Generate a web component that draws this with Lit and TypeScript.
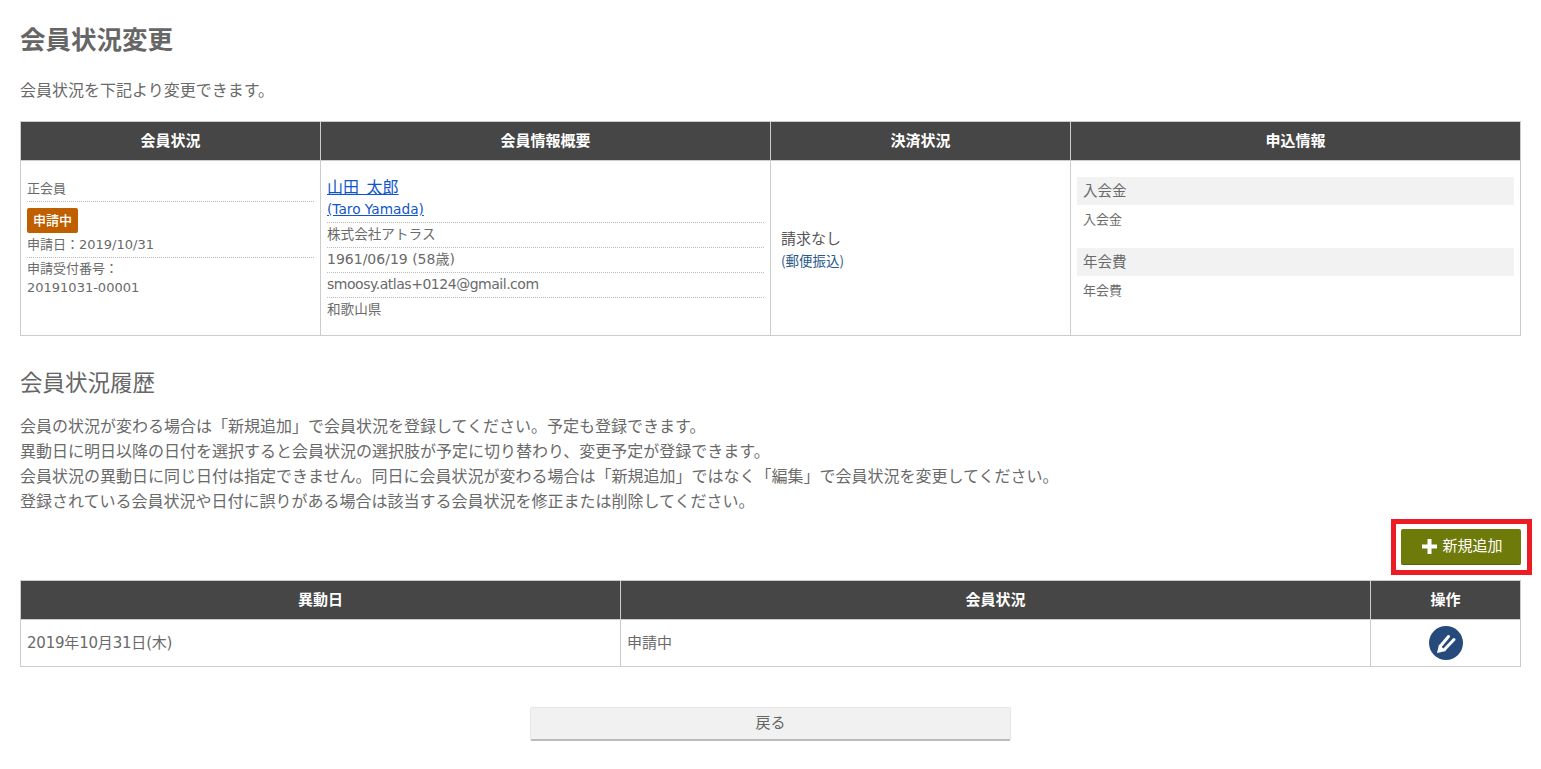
import { LitElement, html, css } from "lit";
import { customElement } from "lit/decorators.js";

@customElement("app-root")
export class AppRoot extends LitElement {
  static styles = css`
    :host { display: block; padding: 0 20px; color: #6a6a6a; background: #fff; font-family: "DejaVu Sans", "Noto Sans CJK JP", sans-serif; font-size: 15px; }
    * { box-sizing: border-box; }
    h1 { margin: 0; padding-top: 20px; font-size: 25.5px; line-height: 36px; font-weight: 700; color: #666; font-family: "Noto Sans CJK JP", sans-serif; }
    .lead { margin: 21px 0 0; font-size: 16px; line-height: 25px; height: 44px; font-family: "Noto Sans CJK JP", sans-serif; }
    table { width: 1500px; border-collapse: collapse; table-layout: fixed; }
    th { background: #464646; color: #fff; font-size: 15px; font-weight: 700; height: 39px; padding: 0 0 3px; border: 1px solid #ccc; font-family: "Noto Sans CJK JP", sans-serif; }
    td { border: 1px solid #ccc; padding: 0 6px; vertical-align: top; font-size: 13px; }
    .cjk { font-family: "Noto Sans CJK JP", sans-serif; }
    .c1 { height: 175px; padding-top: 15px; }
    .row { border-bottom: 1px dotted #bbb; }
    .r-status { height: 26px; line-height: 24px; margin-bottom: 6px; }
    .badge { display: inline-block; background: #bf5f00; color: #fff; font-size: 13px; font-weight: 500; line-height: 24px; height: 25px; width: 51px; text-align: center; border-radius: 2px; vertical-align: top; }
    .dateline { line-height: 22px; height: 25px; }
    .plain { line-height: 19px; }
    .name { font-size: 16px; word-spacing: 4px; line-height: 24px; margin-top: -2px; }
    a { color: #1155cc; text-decoration: underline; }
    .yomi { font-size: 13.7px; line-height: 23px; height: 25px; }
    .m { height: 25px; line-height: 20px; font-size: 14px; }
    .m.cjk { font-size: 13.6px; }
    .mail { letter-spacing: -0.48px; line-height: 22px; }
    .m.last { border: 0; }
    td.pay { vertical-align: middle; padding: 2px 10px 0; color: #555; line-height: 22px; }
    .pay .big { font-size: 15px; }
    .pay .small { font-size: 13.5px; color: #2a5a8a; }
    .apply { padding-top: 16px; }
    .apply .h { background: #f2f2f2; height: 28px; line-height: 26px; padding-left: 6px; font-size: 14.5px; }
    .apply .v { height: 43px; padding: 1px 6px 0; line-height: 25px; font-size: 13px; }
    h2 { margin: 30px 0 0; font-size: 22.5px; font-weight: 400; line-height: 30px; color: #666; font-family: "Noto Sans CJK JP", sans-serif; }
    .notes { margin: 17px 0 0; font-size: 16px; line-height: 25px; font-family: "Noto Sans CJK JP", sans-serif; }
    .actions { display: flex; justify-content: flex-end; margin-top: 6px; height: 61px; width: 1501px; }
    .frame { border: 5px solid #ed1c24; padding: 5px; width: 141px; height: 56px; margin-right: -11px; flex: none; }
    .add { display: flex; align-items: center; justify-content: center; gap: 5px; width: 120px; height: 36px; background: #6e7a0a; color: #fff; border: 0; border-radius: 2px; border-bottom: 1px solid #59630a; font: 15px "Noto Sans CJK JP", sans-serif; padding: 0 0 4px 3px; }
    .add svg { margin-top: 4px; }
    .t2 td { height: 47px; vertical-align: middle; font-size: 15px; padding-bottom: 3px; }
    .t2 td.cjk { font-family: "Noto Sans CJK JP", sans-serif; }
    .t2 th { height: 39px; }
    .date { letter-spacing: -0.2px; }
    .t2 td.op { text-align: center; padding: 0; }
    .edit { display: block; margin: 0 auto; width: 34px; height: 34px; }
    .foot { display: flex; justify-content: center; margin-top: 40px; padding-bottom: 28px; }
    .back { width: 481px; height: 34px; background: #f1f1f1; border: 1px solid #e6e6e6; border-bottom: 2px solid #bbb; border-radius: 2px; color: #666; font: 15px "Noto Sans CJK JP", sans-serif; padding: 0 0 5px; }
  `;

  render() {
    return html`
      <h1>会員状況変更</h1>
      <p class="lead">会員状況を下記より変更できます。</p>
      <table>
        <colgroup><col style="width:300px" /><col style="width:450px" /><col style="width:300px" /><col style="width:450px" /></colgroup>
        <tr><th>会員状況</th><th>会員情報概要</th><th>決済状況</th><th>申込情報</th></tr>
        <tr>
          <td class="c1">
            <div class="row r-status cjk">正会員</div>
            <div><span class="badge cjk">申請中</span></div>
            <div class="row dateline"><span class="cjk">申請日：</span>2019/10/31</div>
            <div class="plain"><span class="cjk">申請受付番号：</span><br />20191031-00001</div>
          </td>
          <td class="c1">
            <div class="name cjk"><a href="#">山田 太郎</a></div>
            <div class="row yomi"><a href="#">(Taro Yamada)</a></div>
            <div class="row m cjk">株式会社アトラス</div>
            <div class="row m">1961/06/19 (58<span class="cjk">歳</span>)</div>
            <div class="row m mail">smoosy.atlas+0124@gmail.com</div>
            <div class="m last cjk">和歌山県</div>
          </td>
          <td class="pay cjk"><div class="big">請求なし</div><div class="small">(郵便振込)</div></td>
          <td class="apply cjk">
            <div class="h">入会金</div><div class="v">入会金</div>
            <div class="h">年会費</div><div class="v">年会費</div>
          </td>
        </tr>
      </table>
      <h2>会員状況履歴</h2>
      <p class="notes">
        会員の状況が変わる場合は「新規追加」で会員状況を登録してください。予定も登録できます。<br />
        異動日に明日以降の日付を選択すると会員状況の選択肢が予定に切り替わり、変更予定が登録できます。<br />
        会員状況の異動日に同じ日付は指定できません。同日に会員状況が変わる場合は「新規追加」ではなく「編集」で会員状況を変更してください。<br />
        登録されている会員状況や日付に誤りがある場合は該当する会員状況を修正または削除してください。
      </p>
      <div class="actions">
        <div class="frame">
          <button class="add">
            <svg width="15" height="15" viewBox="0 0 15 15"><path d="M5.5 0h4v5.5H15v4H9.5V15h-4V9.5H0v-4h5.5z" fill="#fff" /></svg>
            新規追加
          </button>
        </div>
      </div>
      <table class="t2">
        <colgroup><col style="width:600px" /><col style="width:750px" /><col style="width:150px" /></colgroup>
        <tr><th>異動日</th><th>会員状況</th><th>操作</th></tr>
        <tr>
          <td class="date">2019年10月31日(木)</td>
          <td class="cjk">申請中</td>
          <td class="op">
            <svg class="edit" viewBox="0 0 34 34">
              <circle cx="17" cy="17" r="17" fill="#254a7b" />
              <path d="M8 27L10 18.5L17 25z" fill="#fff" />
              <path d="M11.5 20L19.5 10.5M15.5 23.5L25 13.5" stroke="#fff" stroke-width="3" stroke-linecap="round" fill="none" />
            </svg>
          </td>
        </tr>
      </table>
      <div class="foot"><button class="back">戻る</button></div>
    `;
  }
}
